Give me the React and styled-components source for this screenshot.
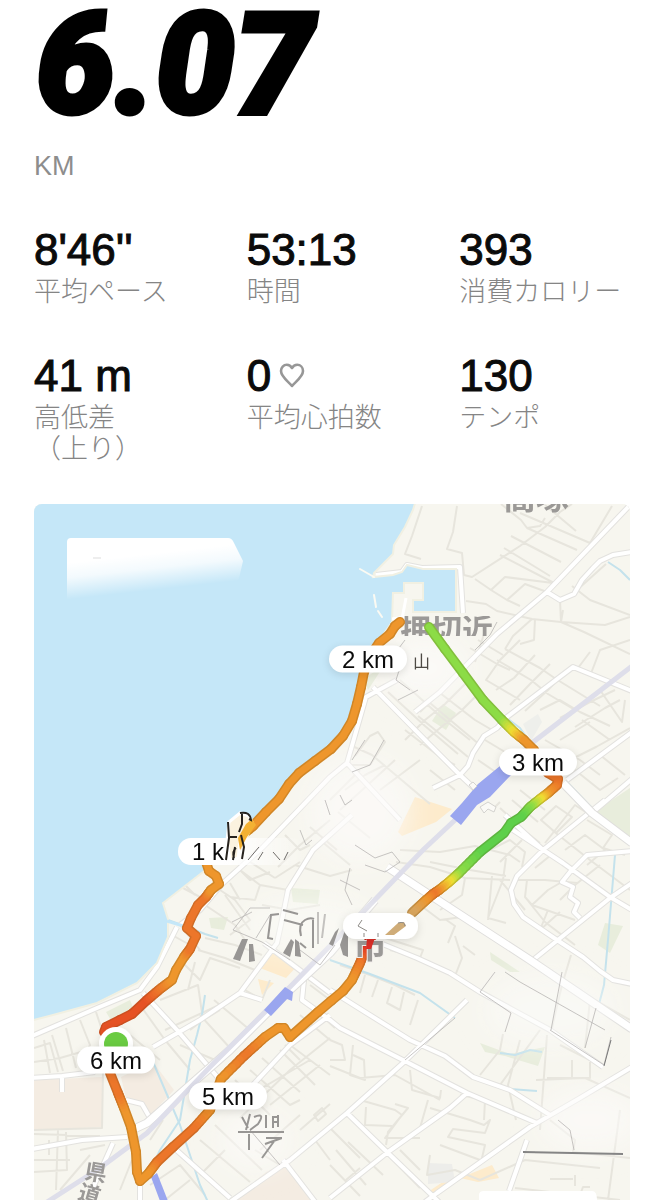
import React from 'react';
import styled, { createGlobalStyle } from 'styled-components';

const GlobalStyle = createGlobalStyle`
  * {
    box-sizing: border-box;
  }

  body {
    margin: 0;
    background: #ffffff;
    color: #0b0b0b;
    font-family: 'Liberation Sans', 'Noto Sans CJK JP', sans-serif;
  }
`;

const Page = styled.main`
  padding: 0 34px;
  overflow: hidden;
`;

const Distance = styled.h1`
  margin: 0;
  padding-left: 2px;
  font-family: Roboto, sans-serif;
  font-size: 140px;
  font-style: italic;
  font-weight: 900;
  line-height: 130px;
  color: #000000;
  -webkit-text-stroke: 5px #000000;
`;

const Unit = styled.p`
  margin: 20px 0 0;
  font-size: 27px;
  line-height: 32px;
  color: #8d8d8d;
`;

const Stats = styled.dl`
  display: grid;
  grid-template-columns: repeat(3, 1fr);
  gap: 42px;
  row-gap: 44px;
  margin: 44px 0 39px;
`;

const Stat = styled.div`
  display: flex;
  flex-direction: column-reverse;
  justify-content: flex-end;
  gap: 3px;
`;

const StatValue = styled.dd`
  display: flex;
  align-items: center;
  gap: 8px;
  margin: 0;
  font-size: 44px;
  line-height: 48px;
  white-space: nowrap;
  -webkit-text-stroke: 1px #0b0b0b;
`;

const StatLabel = styled.dt`
  font-size: 27px;
  font-weight: 300;
  line-height: 31px;
  word-break: keep-all;
  color: #858585;
`;

const MapCard = styled.section`
  position: relative;
  aspect-ratio: 596 / 696;
  border-radius: 8px 8px 0 0;
  overflow: hidden;
  background: #f7f6f0;
`;

const MapDrawing = styled.svg`
  display: block;
  width: 100%;
  height: 100%;
`;

const Marker = styled.span`
  position: absolute;
  left: ${({ $x }) => (($x - 34) / 596) * 100}%;
  top: ${({ $y }) => (($y - 504) / 696) * 100}%;
  transform: translate(-50%, -50%);
  width: 78px;
  height: 27px;
  border-radius: 14px;
  background: #ffffff;
  box-shadow: 0 2px 8px rgba(0, 0, 0, 0.12);
  color: #0b0b0b;
  font-size: 24px;
  line-height: 27px;
  text-align: center;
  white-space: nowrap;
`;

const stats = [
  { label: '平均ペース', value: "8'46''" },
  { label: '時間', value: '53:13' },
  { label: '消費カロリー', value: '393' },
  { label: '高低差（上り）', value: '41 m' },
  { label: '平均心拍数', value: '0', heart: true },
  { label: 'テンポ', value: '130' },
];

const markers = [
  { text: '2 km', x: 368, y: 659 },
  { text: '3 km', x: 538, y: 762 },
  { text: '5 km', x: 228, y: 1096 },
  { text: '6 km', x: 116, y: 1060 },
];

// x, y, [r, g, b]
const orange = [238, 150, 44];
const deep = [236, 118, 42];
const red = [230, 82, 36];
const green = [94, 208, 74];
const lime = [140, 220, 70];
const yellow = [240, 222, 50];

const routes = [
  [
    [104, 1032, red],
    [106, 1027, red],
    [120, 1020, red],
    [132, 1014, red],
    [147, 1000, red],
    [160, 989, deep],
    [172, 980, orange],
    [176, 970, orange],
    [184, 957, orange],
    [190, 949, deep],
    [196, 936, deep],
    [187, 928, deep],
    [191, 918, deep],
    [198, 905, deep],
    [206, 897, deep],
    [211, 890, orange],
    [219, 884, orange],
    [216, 876, orange],
    [209, 871, orange],
    [206, 862, orange],
  ],
  [
    [237, 847, [243, 176, 48]],
    [241, 836, [243, 176, 48]],
    [253, 826, orange],
    [266, 812, orange],
    [279, 799, orange],
    [289, 784, orange],
    [299, 773, orange],
    [315, 761, orange],
    [331, 749, orange],
    [343, 736, orange],
    [352, 721, orange],
    [357, 704, orange],
    [361, 687, orange],
    [364, 672, orange],
    [370, 656, orange],
    [379, 643, orange],
    [390, 634, orange],
    [395, 626, orange],
    [400, 622, orange],
  ],
  [
    [429, 627, lime],
    [445, 649, lime],
    [463, 673, lime],
    [483, 700, lime],
    [502, 720, lime],
    [514, 732, yellow],
    [524, 740, orange],
    [534, 750, orange],
    [548, 773, deep],
    [558, 779, deep],
    [557, 785, deep],
    [548, 793, orange],
    [540, 799, yellow],
    [530, 807, lime],
    [521, 817, green],
    [511, 823, green],
    [504, 833, green],
    [480, 852, green],
    [459, 873, lime],
    [449, 882, yellow],
    [439, 890, orange],
    [433, 894, deep],
    [425, 901, orange],
    [412, 913, [214, 165, 96]],
  ],
  [
    [371, 938, [222, 42, 34]],
    [366, 948, [222, 42, 34]],
    [360, 963, deep],
    [352, 980, orange],
    [343, 991, orange],
    [331, 1001, orange],
    [318, 1012, orange],
    [290, 1037, orange],
    [284, 1028, orange],
    [278, 1028, orange],
    [265, 1037, orange],
    [244, 1056, deep],
    [221, 1079, orange],
    [210, 1110, orange],
    [194, 1128, deep],
    [173, 1147, deep],
    [157, 1162, deep],
    [148, 1174, orange],
    [140, 1181, orange],
    [137, 1172, orange],
    [136, 1152, orange],
    [131, 1127, orange],
    [124, 1108, orange],
    [118, 1093, deep],
    [110, 1073, deep],
  ],
];

const mix = (a, b, t) => a.map((v, i) => Math.round(v + (b[i] - v) * t));

const splitRoute = (points) => {
  const parts = [];
  for (let i = 0; i < points.length - 1; i += 1) {
    const [x1, y1, c1] = points[i];
    const [x2, y2, c2] = points[i + 1];
    const steps = c1 === c2 ? 1 : 6;
    for (let s = 0; s < steps; s += 1) {
      const a = s / steps;
      const b = (s + 1) / steps;
      parts.push({
        d: `M${x1 + (x2 - x1) * a} ${y1 + (y2 - y1) * a}L${x1 + (x2 - x1) * b} ${y1 + (y2 - y1) * b}`,
        color: mix(c1, c2, (a + b) / 2),
      });
    }
  }
  return parts;
};

const minorRoads = [
  // north east
  'M422 506L412 536L405 554L421 559',
  'M457 506L453 532L447 549L462 553L464 575L472 577L520 546L545 527L560 512L572 504',
  'M501 504L521 520L527 528L540 526L545 518',
  'M520 513L590 543L612 506M545 505L576 531',
  'M511 536L561 562M527 528L577 550M504 548L537 568L550 576M500 555L556 584',
  'M475 579L491 590L505 577L553 583M491 590L507 600L520 606M507 600L525 584L547 592',
  'M466 601L486 604L497 611L532 619L561 622L560 600M561 622L605 625L630 617',
  'M532 619L513 636L505 649M535 619L534 640L520 644M561 622L584 632L630 654',
  'M561 622L563 610M572 586L590 600L630 615M577 590L606 564',
  'M505 649L540 668L556 679L600 706M497 660L531 680L548 694L575 710',
  'M520 640L500 660L486 680L520 700M535 655L514 678L496 690M550 664L530 684L510 705',
  'M563 674L548 690L525 711M590 676L600 650L630 640M578 668L590 652',
  'M470 648L497 664L510 670M478 640L503 655M484 634L475 662',
  'M540 710L560 700L580 712L610 726M560 718L590 702L615 690M575 727L605 708L620 700',
  'M600 690L622 722L625 700M610 740L582 720M545 740L580 760L600 775M560 740L590 722',
  'M570 760L596 747L630 728M575 770L600 790L618 778M600 755L625 775',
  // middle
  'M478 694L460 712L440 728L420 745M465 684L445 704L425 720L405 740M440 693L475 720L492 730',
  'M430 703L462 730L480 745M418 716L450 742L468 757M405 730L440 757L455 765',
  'M400 680L440 716L470 740M388 692L425 726L458 754M440 693L420 712M375 688L395 708L433 746',
  'M478 760L500 775M485 740L505 752M420 760L400 775L380 790M430 770L455 790',
  'M520 790L545 810M512 800L538 822M500 808L526 832L540 843M522 840L500 862M545 843L575 805L590 815',
  'M541 820L556 806L572 817L556 833Z M536 841L551 855L535 868M492 810L500 802',
  'M355 756L370 736L378 732L385 742L370 765L350 765M350 745L372 755L430 804',
  'M345 790L365 775L385 765M330 800L360 770M395 760L360 792L340 810',
  'M400 850L440 852L475 846L510 855L520 862M480 855L510 840L525 852L522 867M430 862L470 870L506 876',
  'M396 862L430 867L465 878L510 880M465 878L462 895L440 910M492 876L488 920M506 858L503 880L488 918L506 923',
  'M513 880L545 880L577 883M527 880L525 897L532 905L548 890L560 883M525 897L545 922L575 945',
  'M532 905L575 920M548 910L540 930M540 930L560 912M552 830L590 860L630 890',
  'M565 850L585 835L605 850L587 865M587 820L612 835L603 848L625 855M600 865L575 885L560 900',
  'M420 905L440 920L462 917M445 919L455 926L448 943M455 936L462 958L455 976M463 946L475 955M385 938L423 950L420 958L390 950',
  'M340 965L370 975L395 985L415 995M365 975L360 993M378 980L372 997M392 987L387 1003L400 1010L404 992M418 1000L410 1025',
  'M500 880L525 910M571 955L562 985L552 1028M595 1000L630 1020M590 1000L585 1048',
  // south east
  'M330 1040L342 1045L345 1060L330 1060M353 1045L350 1075L365 1080L364 1060L353 1055M330 1066L360 1078L395 1075L440 1100',
  'M410 1070L412 1090L440 1098L441 1090M353 1110L360 1100L395 1110L402 1115L385 1138L420 1138',
  'M366 1107L365 1125L392 1126M395 1104L408 1108L388 1132L386 1145M430 1108L470 1120L484 1125L490 1120L485 1133L453 1129L448 1137L485 1145L482 1158',
  'M440 1145L480 1160M428 1100L420 1128M430 1155L427 1175L455 1170L480 1180M460 1095L485 1100L484 1120M500 1085L540 1030M520 1040L508 1085L516 1120',
  'M547 1035L540 1130M547 1078L590 1078L590 1062M572 1078L572 1060M480 1075L500 1050L503 1034M560 1045L590 1060M536 1080L585 1078L630 1098',
  'M620 1110L608 1200M550 1120L575 1140L573 1152L630 1158M480 1180L525 1160L600 1168M515 1188L620 1200M550 1179L573 1179M575 1175L575 1186M590 1187L583 1187L580 1195',
  'M336 1150L366 1185M348 1142L383 1175M330 1165L360 1196M386 1153L420 1188M330 1128L360 1158M360 1168L346 1180M400 1150L420 1170',
  // south west
  'M34 1048L50 1043L58 1072M52 1035L63 1071M66 1028L76 1068M80 1020L90 1045L83 1060M34 1062L60 1058L88 1050M96 1012L104 1036M58 1026L70 1018M44 1040L50 1073',
  'M103 1072L102 1128L34 1130M34 1134L100 1136M49 1140L49 1155M66 1132L67 1170L34 1172M34 1160L70 1160M58 1130L56 1190',
  'M140 1005L165 1040L190 1070M160 1000L198 985L203 1020L190 1030M180 960L200 980L210 958L240 968M195 962L188 990',
  'M165 1030L230 1000M180 1045L215 1060M195 1025L220 1010M200 1015L230 1048M214 1000L250 1030M130 1035L160 1060',
  'M198 950L225 958L255 970M205 938L235 945L262 955M180 925L200 950M172 935L190 945M195 895L180 880L190 866M183 888L200 897M220 890L235 900L250 920L230 935',
  'M230 883L240 900M240 870L260 885L255 900L230 897M225 895L250 930M205 905L235 925L245 940M238 868L250 880L270 872M247 860L275 878',
  'M262 905L290 910L320 905M260 885L288 890M275 878L300 862M295 865L330 876L352 870M330 820L300 845L278 867',
  'M320 840L350 865M310 827L337 850M338 812L370 838M285 835L300 850L310 845',
  'M235 1080L270 1115M250 1070L290 1105L300 1100M262 1058L300 1092M280 1050L315 1085M290 1045L330 1075M250 1095L310 1060',
  'M240 1118L290 1070L330 1038M270 1105L320 1065M300 1130L330 1104M260 1150L300 1115M215 1125L262 1170M200 1140L250 1182M225 1150L200 1175',
  'M314 1115L322 1108L326 1114L318 1121Z M300 1015L330 1040M310 1005L335 1028M285 1045L300 1060M310 985L330 1000M245 990L262 1000L270 980',
  'M150 1185L180 1165L205 1195M165 1200L190 1180M120 1190L132 1160M60 1190L90 1155M80 1150L105 1145M163 1120L150 1140M280 1165L255 1150M315 1140L330 1160',
];

const whiteRoads = [
  'M632 503L547 592L497 634L440 692L415 712',
  'M547 592L560 600L574 594L582 580L593 568L600 561L613 555L632 552',
  'M632 691L573 667L507 717L497 728L484 736L473 753L468 766L460 775L433 788',
  'M373 687L430 745L460 775L476 790M505 815L530 838L543 850',
  'M567 780L632 732M592 813L632 779',
  'M397 680L366 697L347 763L330 777L263 847L222 884L200 910L180 925',
  'M347 763L400 820M463 613L460 567L422 568L407 565L402 572L376 575',
  'M513 830L563 863L610 897L632 910',
  'M605 800L543 850L517 876L511 890L514 904L523 917L560 942L583 957L600 971L613 980L632 984',
  'M632 883L610 898L533 960',
  'M632 851L587 855L570 872L562 882L573 887L570 897L578 903L574 912L580 918',
  'M380 943L417 958L450 973L480 992L550 1030L603 1067',
  'M330 990L365 1012L410 1040L445 1056L473 1077L510 1090L550 1115',
  'M330 1020L340 1028L397 1057L467 1093L537 1123',
  'M467 1000L403 1063L347 1113L290 1160L230 1202',
  'M467 1093L450 1108L388 1152L330 1198',
  'M347 1113L388 1153L440 1203',
  'M632 1067L580 1098L530 1127L437 1193L425 1202',
  'M527 1140L520 1160L509 1191',
  'M32 1036L97 1008L140 990L157 967L177 927',
  'M32 1149L82 1140L127 1137',
  'M32 1078L62 1076L95 1072M62 1076L62 1092',
  'M143 993L177 1030L220 1080M153 1047L200 1020L240 993L277 943L283 915L288 890L313 850L352 815',
  'M240 993L262 1000M264 943L330 993M305 970L302 1000L330 1020M173 1147L230 1198M283 1160L316 1203',
  'M113 1143L92 1190M140 1182L140 1202M126 1100L142 1104L150 1118M250 1088L290 1045L330 1015',
];

const wideRoads = [
  'M563 783L592 813L632 843',
  'M387 867L430 895L530 960L632 1029',
  'M375 900L330 953L290 990L230 1050L147 1123L132 1130',
];

const rivers = [
  'M504 716L520 728L530 742',
  'M568 783L590 806L606 822',
  'M615 855L608 940L604 985L598 1008',
  'M608 562L620 570L630 580',
  'M168 920L190 928L205 934L218 938',
  'M205 995L202 1015L197 1035L190 1060L180 1120L160 1150L153 1165',
  'M150 1055L165 1090L180 1125L200 1185L208 1202',
  'M330 960L370 974L420 993L455 1018',
  'M500 1053L515 1055L530 1050L542 1052',
  'M510 1089L537 1091',
];

// darker strokes that show through the built-up areas
const creases = [
  'M480 992L495 972M480 992L511 1013L505 1032M562 972L551 1030M596 1008L585 1048M611 1037L604 1065L550 1030',
  'M405 1060L455 1018M505 972L520 982L605 1030M558 1120L570 1130L574 1150',
  'M300 830L306 845L312 840M325 800L330 815M340 795L345 805L352 800M355 845L375 858L392 852L400 862L385 872L365 865',
  'M350 868L345 890L352 905M340 880L360 890M365 740L352 760M384 740L370 765L352 772',
  'M404 655L396 680L410 690M398 700L418 690M405 640L390 660M475 650L490 635L497 622',
  'M233 930L250 908L270 908M233 930L262 942L290 960M270 915L256 938M232 922L252 912M300 950L320 965L335 945M250 1130L280 1165',
];

const Route = () => (
  <g fill='none' strokeLinecap='round'>
    {routes.map((points, index) => {
      const parts = splitRoute(points);
      return (
        <g key={index}>
          {parts.map((part) => (
            <path
              key={part.d}
              d={part.d}
              stroke={`rgb(${mix(part.color, [90, 70, 20], 0.2)})`}
              strokeWidth='10'
            />
          ))}
          {parts.map((part) => (
            <path
              key={part.d}
              d={part.d}
              stroke={`rgb(${part.color})`}
              strokeWidth='7'
            />
          ))}
        </g>
      );
    })}
  </g>
);

const Roads = ({ paths, width, casing }) => (
  <g fill='none' strokeLinejoin='round'>
    <path d={paths.join('')} stroke={casing} strokeWidth={width + 2} />
    <path d={paths.join('')} stroke='#ffffff' strokeWidth={width} />
  </g>
);

const RunMap = () => (
  <MapDrawing viewBox='34 504 596 696' aria-hidden='true'>
    <defs>
      <linearGradient
        id='cardFade'
        gradientUnits='userSpaceOnUse'
        x1='150'
        y1='554'
        x2='154'
        y2='590'
      >
        <stop offset='0' stopColor='#ffffff' />
        <stop offset='0.4' stopColor='#ffffff' stopOpacity='0.8' />
        <stop offset='1' stopColor='#ffffff' stopOpacity='0' />
      </linearGradient>
      <linearGradient id='pillFade' x1='0' y1='0' x2='1' y2='0'>
        <stop offset='0.35' stopColor='#ffffff' />
        <stop offset='1' stopColor='#ffffff' stopOpacity='0' />
      </linearGradient>
      <filter id='haze' x='-30%' y='-30%' width='160%' height='160%'>
        <feGaussianBlur stdDeviation='14' />
      </filter>
      <filter id='shade' x='-20%' y='-60%' width='140%' height='220%'>
        <feDropShadow dx='0' dy='2' stdDeviation='4' floodOpacity='0.12' />
      </filter>
      <clipPath id='harborLabel'>
        <rect x='398' y='616' width='120' height='20' />
      </clipPath>
      <clipPath id='cityLabel'>
        <rect x='340' y='938' width='60' height='30' />
      </clipPath>
    </defs>

    <rect x='34' y='504' width='596' height='696' fill='#f7f6ef' />

    <g fill='#f4ece2'>
      <path d='M34 1080L102 1077V1127L34 1130Z' />
      <path d='M121 1077L153 1062L174 1090L148 1118L138 1102L126 1098Z' />
      <path d='M266 1172L284 1164L312 1200H232Z' />
    </g>
    <g fill='#fdebcc'>
      <path d='M398 832L415 797L452 809L436 822L402 836Z' />
      <path d='M272 953L297 966L286 978L260 968Z' />
      <path d='M258 979L274 983L262 995Z' />
      <path d='M428 1192L450 1177L456 1181L435 1197Z M460 1178L492 1165L499 1178L478 1182Z' />
    </g>
    <g fill='#e8eddc'>
      <path d='M594 812L630 788V838L622 834Z' />
      <path d='M443 704L456 713L446 730L432 721Z' />
      <path d='M291 888L320 890L318 904L293 902Z' />
      <path d='M209 918L228 917L224 930L211 928Z' />
      <path d='M490 952L520 972L510 972L491 960Z' />
      <path d='M480 1043L510 1054L545 1047L538 1066L505 1056L485 1052Z' />
      <path d='M605 923L623 926L610 953L598 945Z' />
      <path d='M106 1012L130 1000L134 1010L112 1022Z' />
      <path d='M364 679L385 664L368 690Z' />
    </g>
    <path d='M523 724L538 714L542 722L531 741Z' fill='#eeefeb' />
    <path d='M428 1163L452 1164L455 1182L428 1184Z' fill='#ededea' />

    <path
      d={minorRoads.join('')}
      fill='none'
      stroke='#e7e5dd'
      strokeWidth='2'
      strokeLinejoin='round'
    />
    <path
      d={rivers.join('')}
      fill='none'
      stroke='#c4e2ec'
      strokeWidth='2'
      strokeLinejoin='round'
    />
    <Roads paths={whiteRoads} width={4} casing='#e3e2df' />
    <Roads paths={wideRoads} width={7} casing='#dfdedc' />

    {/* railway */}
    <path
      d='M632 666L532 743L470 806L423 850L363 912L287 990L210 1067L147 1133L100 1168L47 1202'
      fill='none'
      stroke='#dedeea'
      strokeWidth='5'
    />
    <g fill='#9aa6ef'>
      <path d='M500 766L512 774L490 797L477 805L461 825L450 816L462 803L478 784Z' />
      <path d='M285 987L293 992L292 1001L287 999L271 1016L264 1010Z' />
      <path d='M151 1177L157 1173L168 1201H160Z' />
    </g>
    <g fill='#fbfaf6' stroke='#d4d3cf' strokeWidth='1'>
      <path d='M480 807L488 802L496 807L494 812L488 809L484 813Z' />
      <path d='M469 785L473 782L477 786L473 790Z' />
    </g>

    {/* pale built-up areas */}
    <g filter='url(#haze)' fill='#fcfbf9'>
      <ellipse cx='425' cy='668' rx='42' ry='30' opacity='0.75' />
      <ellipse cx='360' cy='810' rx='50' ry='52' opacity='0.7' />
      <ellipse cx='310' cy='925' rx='66' ry='28' opacity='0.6' />
      <ellipse cx='550' cy='1010' rx='65' ry='36' opacity='0.55' />
      <ellipse cx='590' cy='1120' rx='50' ry='30' opacity='0.7' />
      <ellipse cx='255' cy='1140' rx='34' ry='28' opacity='0.7' />
    </g>
    <g fill='none' stroke='#b4b2b0' strokeWidth='1'>
      <path d={creases.join('')} opacity='0.75' />
      <path d='M523 1152L623 1154' stroke='#858585' strokeWidth='2' />
      <path d='M611 1040L604 1066' stroke='#777777' />
    </g>

    {/* sea, beach and harbor */}
    <path
      d='M30 500H416L413 510L405 527L394 545L393 554L374 573L373 577L393 575L402 572L407 565L423 569H456V612H413V600H423V583H404V593H393L392 622L376 645L364 662L357 700L350 724L331 748L297 774L268 808L240 838L203 872L163 903L168 919V937L157 963L137 983L97 1003L53 1015L30 1021Z'
      fill='#c5e7f8'
      stroke='#f1f0e2'
      strokeWidth='2'
    />
    <path
      d='M360 569L374 577M374 595L376 607M378 611L382 617'
      stroke='#fbfaf3'
      strokeWidth='2'
      strokeLinecap='round'
    />
    <path
      d='M406 598L402 619M392 619L405 617'
      stroke='#ffffff'
      strokeWidth='3'
    />
    <path
      d='M167 921L180 925L192 929'
      fill='none'
      stroke='#c5e7f8'
      strokeWidth='3'
    />

    {/* floating card over the sea */}
    <path
      d='M67 542Q67 538 71 538H228Q232 538 234 543L243 561L234 600H67Z'
      fill='url(#cardFade)'
    />
    <path d='M93 558H101' stroke='#dddddd' strokeWidth='1' />

    {/* place names */}
    <g
      fill='#9b9997'
      fontFamily='"Noto Sans CJK JP", sans-serif'
      fontWeight='700'
    >
      <text x='503' y='509' fontSize='33'>
        高塚
      </text>
      <g clipPath='url(#harborLabel)'>
        <text x='400' y='641' fontSize='31'>
          押切近
        </text>
      </g>
      <text
        x='413'
        y='668'
        fontSize='17'
        fill='#4e4a45'
        fontWeight='400'
      >
        山
      </text>
      <text x='85' y='1180' fontSize='22' transform='rotate(10 94 1172)'>
        県
      </text>
      <text x='78' y='1202' fontSize='22' transform='rotate(16 88 1196)'>
        道
      </text>
    </g>
    <g fill='#989694'>
      <path d='M242 939H248L240 961L233 959Z' />
      <path d='M249 944H253L255 961L249 962Z' />
      <path d='M291 939L294 942L290 957L283 953Z' />
      <path d='M295 939L299 942L301 957L295 956Z' />
      <path d='M345 930L348 936V957L343 955L340 945Z' />
      <path d='M335 932L339 928L333 946L329 944Z' />
    </g>
    <g fill='none' stroke='#989694' strokeWidth='2'>
      <path d='M279 914L271 915L268 938L273 939M283 910L298 914M284 920L303 925' />
      <path d='M301 936Q298 924 305 920Q310 917 314 919M313 920V948M300 943L306 948' />
      <path d='M318 912V944M325 914L322 938' stroke='#c4c2bf' />
      <path d='M242 1117L248 1128M250 1114L246 1130M254 1117Q266 1112 258 1124L250 1130M266 1115V1128M273 1117V1128M278 1115V1127M272 1117H278M272 1122H278M238 1132H284M266 1138H282M249 1134V1150M265 1144L282 1138M262 1158L275 1140' />
    </g>

    <Route />

    <g clipPath='url(#cityLabel)'>
      <text
        x='353'
        y='958'
        fontSize='34'
        fontWeight='700'
        fontFamily='"Noto Sans CJK JP", sans-serif'
        fill='#9b9997'
        stroke='#f2efec'
        strokeWidth='2'
        paintOrder='stroke'
      >
        市
      </text>
    </g>
    <path d='M366 949L367 938H375L371 949Z' fill='#dc2f28' />

    {/* worn 4 km marker */}
    <rect
      x='343'
      y='913'
      width='75'
      height='26'
      rx='13'
      fill='#ffffff'
      filter='url(#shade)'
    />
    <path
      d='M385 935L398 923L404 922L406 926L394 935Z'
      fill='#cfac78'
    />
    <path
      d='M362 920L358 926L367 931M364 933V937M378 933V937M398 923Q405 921 405 926'
      fill='none'
      stroke='#8d8a86'
      strokeWidth='1'
    />

    {/* 1 km marker, partly covered by a landmark */}
    <rect
      x='178'
      y='838'
      width='128'
      height='27'
      rx='13'
      fill='url(#pillFade)'
    />
    <text
      x='192'
      y='860'
      fontSize='24'
      fontFamily='"Liberation Sans", sans-serif'
      fill='#0b0b0b'
    >
      1 k
    </text>
    <path
      d='M227 840L229 822L240 813L249 816L252 822L247 836L240 842L238 858L230 860Z'
      fill='#fbf2df'
      stroke='#ffffff'
      strokeWidth='3'
    />
    <path
      d='M240 850L238 838L246 824L252 819L256 825L247 837Z'
      fill='#f3b133'
    />
    <path
      d='M240 813Q250 811 251 820L249 819M242 814V824L239 832M228 822L229 838L226 860M230 837H237M235 847L233 860M241 835L244 847L242 859M236 848Q232 851 234 858'
      fill='none'
      stroke='#26221e'
      strokeWidth='2'
    />
    <path
      d='M248 860L259 847M258 860L263 852M273 852L280 860M288 852L284 860'
      stroke='#6e6b68'
      strokeWidth='1'
      fill='none'
    />

    {/* start point */}
    <circle cx='116' cy='1044' r='17' fill='#ffffff' filter='url(#shade)' />
    <circle cx='116' cy='1044' r='12' fill='#6acb42' />

    <path d='M479 1200V1195Q479 1191 484 1191H592Q597 1191 597 1200Z' fill='#ffffff' />
  </MapDrawing>
);

const HeartIcon = () => (
  <svg width='26' height='26' viewBox='0 0 26 26' fill='none' aria-hidden='true'>
    <path
      d='M13 23C10.5 19.5 2 14 2 8C2 4.4 4.6 1.8 7.8 1.8C10.2 1.8 12 3.2 13 5C14 3.2 15.8 1.8 18.2 1.8C21.4 1.8 24 4.4 24 8C24 14 15.5 19.5 13 23Z'
      stroke='#979797'
      strokeWidth='2.6'
      strokeLinejoin='round'
    />
  </svg>
);

// lets a label break only in front of its bracket
const breakLabel = (label) => {
  const [name, note] = label.split('（');
  return note ? (
    <>
      {name}
      <wbr />（{note}
    </>
  ) : (
    name
  );
};

const App = () => (
  <>
    <GlobalStyle />
    <Page>
      <Distance>6.07</Distance>
      <Unit>KM</Unit>
      <Stats>
        {stats.map(({ label, value, heart }) => (
          <Stat key={label}>
            <StatLabel>{breakLabel(label)}</StatLabel>
            <StatValue>
              {value}
              {heart && <HeartIcon />}
            </StatValue>
          </Stat>
        ))}
      </Stats>
      <MapCard>
        <RunMap />
        {markers.map(({ text, x, y }) => (
          <Marker key={text} $x={x} $y={y}>
            {text}
          </Marker>
        ))}
      </MapCard>
    </Page>
  </>
);

export default App;
